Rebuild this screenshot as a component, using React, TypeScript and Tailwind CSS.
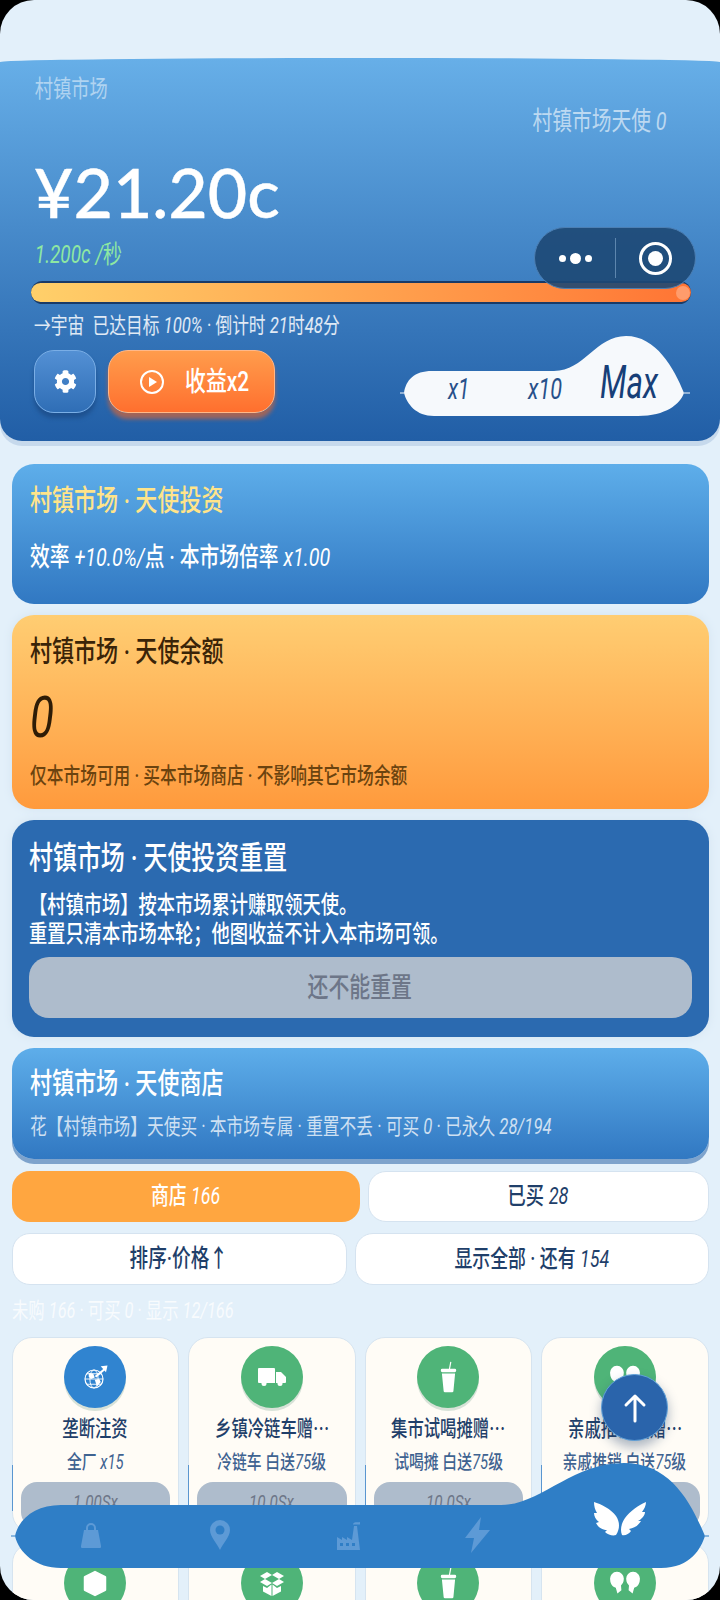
import type { ReactNode } from "react";
import { FaCog } from "react-icons/fa";

// latin runs are italic in the game's font, CJK stays upright
function Mixed({ text }: { text: string }) {
  return (
    <>
      {text.split(/([A-Za-z0-9.+%/]+)/).map((part, i) =>
        i % 2 === 1 ? (
          <span key={i} className="font-normal italic">
            {part}
          </span>
        ) : (
          <span key={i}>{part}</span>
        ),
      )}
    </>
  );
}

function Narrow({ text, className = "" }: { text: string; className?: string }) {
  return (
    <div className={`origin-left scale-x-[0.76] whitespace-nowrap ${className}`}>
      <Mixed text={text} />
    </div>
  );
}

function NarrowCenter({ text, className = "" }: { text: string; className?: string }) {
  return (
    <div className={`flex justify-center whitespace-nowrap ${className}`}>
      <span className="inline-block origin-center scale-x-[0.76]">
        <Mixed text={text} />
      </span>
    </div>
  );
}

function GlobeIcon() {
  return (
    <svg width="27" height="27" viewBox="0 0 36 36" fill="none" stroke="white">
      <circle cx="16" cy="20" r="12" strokeWidth="1.6" />
      <ellipse cx="16" cy="20" rx="5.5" ry="12" strokeWidth="1.2" />
      <path d="M4 20h24M6 13h20M6 27h20" strokeWidth="1.2" />
      <path d="M9 12l6 1 2 5-5 2-3-3zM17 21l6-1 2 4-5 6z" fill="white" stroke="none" />
      <path d="M18 17L30 7" strokeWidth="3" />
      <path d="M25 3l9-1-2 9z" fill="white" stroke="none" />
    </svg>
  );
}

function TruckIcon() {
  return (
    <svg width="28" height="18" viewBox="0 0 28 18" fill="white">
      <path d="M1 0h15a1 1 0 0 1 1 1v14H1a1 1 0 0 1-1-1V1a1 1 0 0 1 1-1z" />
      <path d="M18 4h5l5 5v5a1 1 0 0 1-1 1h-9z" />
      <circle cx="6" cy="15.500" r="2.500" />
      <circle cx="22" cy="15.500" r="2.500" />
    </svg>
  );
}

function CupIcon() {
  return (
    <svg width="25" height="32" viewBox="0 0 36 46" fill="white">
      <path d="M18.500 12L20.500 1l1.600.3L20.200 12z" />
      <rect x="7" y="11" width="22" height="5" rx="2" />
      <path d="M8.500 18h19l-2.400 25a2 2 0 0 1-2 2H13a2 2 0 0 1-2-2z" />
    </svg>
  );
}

function HeadsIcon() {
  return (
    <svg width="32" height="24" viewBox="0 0 40 30" fill="white">
      <path d="M10 1a8.500 8.500 0 0 1 8.500 9c0 4-2 6.500-3.500 8l.5 6-5 4-2-7c-4-1-7-5-7-10a8.500 8.500 0 0 1 8.500-10z" />
      <path d="M30 1a8.500 8.500 0 0 0-8.500 9c0 4 2 6.500 3.500 8l-.5 6 5 4 2-7c4-1 7-5 7-10a8.500 8.500 0 0 0-8.500-10z" />
    </svg>
  );
}

function CubeIcon() {
  return (
    <svg width="24" height="27" viewBox="0 0 32 36" fill="white">
      <path d="M16 1l14 7a2 2 0 0 1 1 2v16a2 2 0 0 1-1 2l-14 7-14-7a2 2 0 0 1-1-2V10a2 2 0 0 1 1-2z" />
    </svg>
  );
}

function OpenBoxIcon() {
  return (
    <svg width="26" height="25" viewBox="0 0 26 25" fill="white">
      <path d="M1 5l7-4 5 3-7 4zM25 5l-7-4-5 3 7 4zM1 11l5-3 7 4-5 3zM25 11l-5-3-7 4 5 3z" />
      <path d="M4 15l4 2 4.500-3.500V25L4 20.500zM22 15l-4 2-4.500-3.500V25l8.500-4.500z" />
    </svg>
  );
}

function BagIcon() {
  return (
    <svg width="20" height="26" viewBox="0 0 20 26" fill="currentColor">
      <path d="M5 9V6a5 5 0 0 1 10 0v3h-2V6a3 3 0 0 0-6 0v3z" />
      <path d="M3 8h14l3 16a1.500 1.500 0 0 1-1.500 2h-17A1.500 1.500 0 0 1 0 24z" />
    </svg>
  );
}

function PinIcon() {
  return (
    <svg width="20" height="30" viewBox="0 0 20 30" fill="currentColor">
      <path d="M10 0a10 10 0 0 1 10 10c0 7-7 13-10 20C7 23 0 17 0 10A10 10 0 0 1 10 0z" />
      <circle cx="10" cy="10" r="4.500" fill="#2f7ec6" />
    </svg>
  );
}

function FactoryIcon() {
  return (
    <svg width="23" height="30" viewBox="0 0 23 30" fill="currentColor">
      <path d="M0 30V17l5 3v-3l5 3v-3l5 3L17 6h3l3 24z" />
      <path d="M16 4c2-3 5-1 7-2v2.500h-7z" />
      <path d="M3 23h3v3H3zM9 23h3v3H9zM15 23h3v3h-3z" fill="#2f7ec6" />
    </svg>
  );
}

function BoltIcon() {
  return (
    <svg width="25" height="36" viewBox="0 0 25 36" fill="currentColor">
      <path d="M16 0L0 21h9L6 36l19-23h-11z" />
    </svg>
  );
}

function WingsIcon() {
  return (
    <svg width="54" height="36" viewBox="0 0 54 36" fill="white">
      <path d="M1 1C8 3 18 8 23 15C27 21 27 28 23 34C20 35 15 34 12 31L14 29C9 29 5 26 3 22L6 21C3 19 1 15 1 12L4 12C2 9 1 5 1 1Z" />
      <path d="M53 1C46 4 37 10 32 17C28 23 27 29 29 34C32 35 36 33 38 30L36 28C41 27 45 25 48 20L45 20C49 18 52 14 52 11L49 11C51 8 53 5 53 1Z" />
    </svg>
  );
}

type ShopItem = {
  name: string;
  desc: string;
  price: string;
  circle: string;
  icon: ReactNode;
};

const FIRST_ROW: ShopItem[] = [
  { name: "垄断注资", desc: "全厂 x15", price: "1.00Sx", circle: "bg-[#3084d0]", icon: <GlobeIcon /> },
  { name: "乡镇冷链车赠…", desc: "冷链车 白送75级", price: "10.0Sx", circle: "bg-[#4fb478]", icon: <TruckIcon /> },
  { name: "集市试喝摊赠…", desc: "试喝摊 白送75级", price: "10.0Sx", circle: "bg-[#4fb478]", icon: <CupIcon /> },
  { name: "亲戚推销团赠…", desc: "亲戚推销 白送75级", price: "10.0Sx", circle: "bg-[#4fb478]", icon: <HeadsIcon /> },
];

const SECOND_ROW: ReactNode[] = [
  <CubeIcon key="cube" />,
  <OpenBoxIcon key="box" />,
  <CupIcon key="cup" />,
  <HeadsIcon key="heads" />,
];

function ShopCard({ item }: { item: ShopItem }) {
  return (
    <div className="relative flex h-[196px] flex-col rounded-[20px] border border-[#d6e4f0] bg-[#fffcf6] px-[8px] pt-[8px]">
      <div className={`mx-auto flex h-[62px] w-[62px] items-center justify-center rounded-full shadow-[0_3px_0_#d8e2d8] ${item.circle}`}>
        {item.icon}
      </div>
      <NarrowCenter text={item.name} className="mt-[5px] h-[28px] font-['Noto_Sans_CJK_SC'] text-[21.500px] leading-[28px] font-medium text-[#1f3f6a]" />
      <NarrowCenter text={item.desc} className="mt-[10px] h-[24px] text-[19.500px] leading-[24px] font-medium text-[#3f6391]" />
      <div className="mt-[7px] flex h-[46px] items-start justify-center rounded-[16px] bg-[#aebccc] pt-[7px]">
        <NarrowCenter text={item.price} className="text-[20px] leading-[26px] text-[#6d7688]" />
      </div>
      <div className="absolute top-[127px] left-[-1px] h-[46px] w-px bg-[#5a96d0]" />
    </div>
  );
}

function MultiplierTabs() {
  return (
    <div className="relative -mt-[14px] mr-[-1px] flex h-[80px] w-[292px] text-[#27508a]">
      <svg className="absolute inset-0" width="292" height="80" viewBox="0 0 292 80">
        <path
          d="M6 57C8 44 16 35 34 35L156 35C186 35 198 0 228 0C258 0 276 32 286 57C282 68 268 80 240 80L36 80C18 80 9 68 6 57Z"
          fill="#f6f9fc"
        />
        <path d="M2 57h4M286 57h6" stroke="#f6f9fc" strokeWidth="1" />
      </svg>
      <div className="relative flex w-full items-end pb-[10px] italic">
        <span className="ml-[50px] inline-block w-[70px] origin-left scale-x-[0.7] text-[30px] leading-[34px]">x1</span>
        <span className="ml-[10px] inline-block w-[60px] origin-left scale-x-[0.72] text-[30px] leading-[34px]">x10</span>
        <span className="ml-[12px] -mb-[2px] inline-block origin-left scale-x-[0.68] text-[46px] leading-[52px] text-[#173f78]">Max</span>
      </div>
    </div>
  );
}

function Header() {
  return (
    <header className="relative mt-[58px] h-[383px] rounded-t-[360px_4px] rounded-b-[22px] bg-gradient-to-b from-[#67afe8] to-[#215ea6] px-[31px] pt-[18px] shadow-[0_5px_0_#c6d9ec]">
      <Narrow text="村镇市场" className="pl-[5px] text-[24px] leading-[26px] text-white/50" />
      <div className="mt-[6px] flex justify-end pr-[22px]">
        <span className="inline-block origin-right scale-x-[0.76] text-[26px] leading-[26px] whitespace-nowrap text-white/60">
          <Mixed text="村镇市场天使 0" />
        </span>
      </div>
      <div className="mt-[22px] pl-[3px] font-['Lato'] text-[68px] leading-[72px] font-medium text-white [-webkit-text-stroke:0.4px_white]">
        ¥21.20c
      </div>
      <Narrow text="1.200c /秒" className="mt-[14px] pl-[5px] text-[25px] leading-[26px] text-[#8ee8a2]" />
      <div className="mt-[13px] mr-[-2px] flex h-[23px] items-center rounded-full bg-[#1a3a66]">
        <div className="relative h-[19px] w-full rounded-full bg-gradient-to-r from-[#ffd06a] to-[#ff7434]">
          <div className="absolute top-[2.500px] right-[1px] h-[14px] w-[14px] rounded-full bg-[#ff9c6c]" />
        </div>
      </div>
      <Narrow text="→宇宙  已达目标 100% · 倒计时 21时48分" className="mt-[9px] pl-[4px] text-[22px] leading-[25px] whitespace-pre text-white/85" />
      <div className="mt-[12px] flex items-start justify-between pl-[3px]">
        <div className="flex gap-[12px]">
          <div className="flex h-[63px] w-[62px] items-center justify-center rounded-[20px] border border-[#7aaee6] bg-gradient-to-b from-[#5390d4] to-[#2f6eb6] shadow-[0_5px_4px_#1e518f]">
            <FaCog size={23} color="white" />
          </div>
          <div className="flex h-[63px] w-[167px] items-center rounded-[20px] border border-[#ffb889] bg-gradient-to-b from-[#ff9c4c] to-[#ff6f2e] pl-[30px] shadow-[0_6px_4px_#a0655a]">
            <svg width="26" height="26" viewBox="0 0 26 26" fill="none" stroke="white" strokeWidth="2">
              <circle cx="13" cy="13" r="11" />
              <path d="M10 8l8 5-8 5z" fill="white" stroke="none" />
            </svg>
            <span className="ml-[20px] inline-block origin-left scale-x-[0.76] text-[27.500px] leading-[30px] font-medium whitespace-nowrap text-white">
              收益x2
            </span>
          </div>
        </div>
        <MultiplierTabs />
      </div>
      {/* wechat mini program capsule */}
      <div className="absolute top-[169px] right-[24px] flex h-[62px] w-[162px] items-center rounded-full border border-[#4c7fb3] bg-[#1d4874]/90">
        <div className="flex w-[80px] items-center justify-center gap-[4px] pl-[1px]">
          <span className="h-[7px] w-[7px] rounded-full bg-white" />
          <span className="h-[11px] w-[11px] rounded-full bg-white" />
          <span className="h-[7px] w-[7px] rounded-full bg-white" />
        </div>
        <div className="h-[40px] w-px bg-[#5d86ae]" />
        <div className="flex flex-1 items-center justify-center">
          <div className="flex h-[33px] w-[33px] items-center justify-center rounded-full border-[3px] border-white">
            <span className="h-[15px] w-[15px] rounded-full bg-white" />
          </div>
        </div>
      </div>
    </header>
  );
}

function BottomNav() {
  return (
    <div className="absolute top-[1463px] left-[11px] h-[105px] w-[698px]">
      <svg className="absolute inset-0" width="698" height="105" viewBox="0 0 698 105">
        <path
          d="M4 73C8 55 25 42 50 42L490 42C530 42 560 0 613 0C660 0 680 40 694 73C690 85 680 105 650 105L50 105C25 105 8 90 4 73Z"
          fill="#2f7ec6"
        />
        <path d="M0 73h4M694 73h4" stroke="#2f7ec6" strokeWidth="1" />
      </svg>
      <div className="relative flex h-full items-center pt-[39px] pl-[15px] text-[#5d9ad6]">
        <div className="flex w-[129px] justify-center"><BagIcon /></div>
        <div className="flex w-[129px] justify-center"><PinIcon /></div>
        <div className="flex w-[129px] justify-center"><FactoryIcon /></div>
        <div className="flex w-[129px] justify-center"><BoltIcon /></div>
        <div className="flex w-[155px] justify-center"><div className="-mt-[32px]"><WingsIcon /></div></div>
      </div>
    </div>
  );
}

export default function App() {
  return (
    <div className="h-[1600px] w-[720px] bg-black font-['Roboto','Noto_Sans_CJK_SC',sans-serif]">
      <div className="relative h-full overflow-hidden rounded-[34px] bg-[#e3f0fa]">
        <div className="flex flex-col">
          <Header />

          <main className="mt-[23px] flex flex-col px-[11.500px]">
            <section className="h-[140px] rounded-[22px] bg-gradient-to-b from-[#5eaeea] to-[#3178c2] px-[18px] pt-[20px]">
              <Narrow text="村镇市场 · 天使投资" className="text-[29px] leading-[34px] font-medium text-[#ffe48a]" />
              <Narrow text="效率 +10.0%/点 · 本市场倍率 x1.00" className="mt-[24px] text-[26px] leading-[30px] font-medium text-white" />
            </section>

            <section className="mt-[11px] h-[194px] rounded-[22px] bg-gradient-to-b from-[#ffcd72] to-[#ff9a3c] px-[18px] pt-[20px] shadow-[0_0_10px_#d4e3f0]">
              <Narrow text="村镇市场 · 天使余额" className="text-[29px] leading-[34px] font-medium text-[#3a2408]" />
              <Narrow text="0" className="mt-[14px] text-[58px] leading-[68px] text-[#2e1c06]" />
              <Narrow text="仅本市场可用 · 买本市场商店 · 不影响其它市场余额" className="mt-[11px] text-[22px] leading-[28px] font-medium text-[#6b430f]" />
            </section>

            <section className="mt-[11px] h-[217px] rounded-[22px] bg-[#2b6ab0] px-[17px] pt-[20px] shadow-[0_0_10px_#d4e3f0]">
              <Narrow text="村镇市场 · 天使投资重置" className="text-[31.500px] leading-[38px] font-medium text-white" />
              <Narrow text="【村镇市场】按本市场累计赚取领天使。" className="mt-[13px] text-[24px] leading-[29px] font-medium text-white" />
              <Narrow text="重置只清本市场本轮；他图收益不计入本市场可领。" className="text-[24px] leading-[29px] font-medium text-white" />
              <div className="mt-[8px] h-[61px] rounded-[20px] bg-[#aebccc]">
                <NarrowCenter text="还不能重置" className="text-[27.500px] leading-[61px] font-medium text-[#6d7688]" />
              </div>
            </section>

            <section className="mt-[11px] h-[111px] rounded-[22px] bg-gradient-to-b from-[#5eaeea] to-[#3178c2] px-[18px] pt-[19px] shadow-[0_5px_0_#7ea3cc]">
              <Narrow text="村镇市场 · 天使商店" className="text-[29px] leading-[34px] font-medium text-white" />
              <Narrow text="花【村镇市场】天使买 · 本市场专属 · 重置不丢 · 可买 0 · 已永久 28/194" className="mt-[12px] text-[22px] leading-[27px] text-white/75" />
            </section>

            <div className="mt-[12px] flex gap-[8px]">
              <div className="h-[51px] w-[348px] rounded-[18px] bg-[#ffa640]">
                <NarrowCenter text="商店 166" className="text-[23.500px] leading-[51px] font-medium text-white" />
              </div>
              <div className="h-[51px] flex-1 rounded-[18px] border border-[#d5e3f0] bg-white">
                <NarrowCenter text="已买 28" className="text-[24px] leading-[49px] font-medium text-[#1f3f6a]" />
              </div>
            </div>

            <div className="mt-[11px] flex gap-[8px]">
              <div className="h-[52px] w-[335px] rounded-[18px] border border-[#d5e3f0] bg-white">
                <NarrowCenter text="排序·价格↑" className="text-[24.500px] leading-[50px] font-medium text-[#1f3f6a]" />
              </div>
              <div className="h-[52px] flex-1 rounded-[18px] border border-[#d5e3f0] bg-white">
                <NarrowCenter text="显示全部 · 还有 154" className="text-[23.500px] leading-[50px] font-medium text-[#1f3f6a]" />
              </div>
            </div>

            <Narrow text="未购 166 · 可买 0 · 显示 12/166" className="mt-[14px] h-[24px] text-[21.500px] leading-[24px] text-white/75" />

            <div className="mt-[14px] grid grid-cols-4 gap-x-[9px] gap-y-[10px]">
              {FIRST_ROW.map((item) => (
                <ShopCard key={item.name} item={item} />
              ))}
              {SECOND_ROW.map((icon, i) => (
                <div key={i} className="h-[80px] rounded-t-[20px] border border-[#d6e4f0] bg-[#fffcf6] pt-[8px]">
                  <div className="mx-auto flex h-[62px] w-[62px] items-center justify-center rounded-full bg-[#4fb478]">
                    {icon}
                  </div>
                </div>
              ))}
            </div>
          </main>
        </div>

        <BottomNav />

        {/* back to top */}
        <div className="absolute top-[1374px] left-[601px] flex h-[67px] w-[67px] items-center justify-center rounded-full border border-[#5fa0d8] bg-[#2a64ab] shadow-[0_6px_12px_rgba(40,70,110,0.4)]">
          <svg width="24" height="30" viewBox="0 0 24 30" fill="none" stroke="white" strokeWidth="3" strokeLinecap="round" strokeLinejoin="round">
            <path d="M12 28V3M3 12l9-9 9 9" />
          </svg>
        </div>
      </div>
    </div>
  );
}
